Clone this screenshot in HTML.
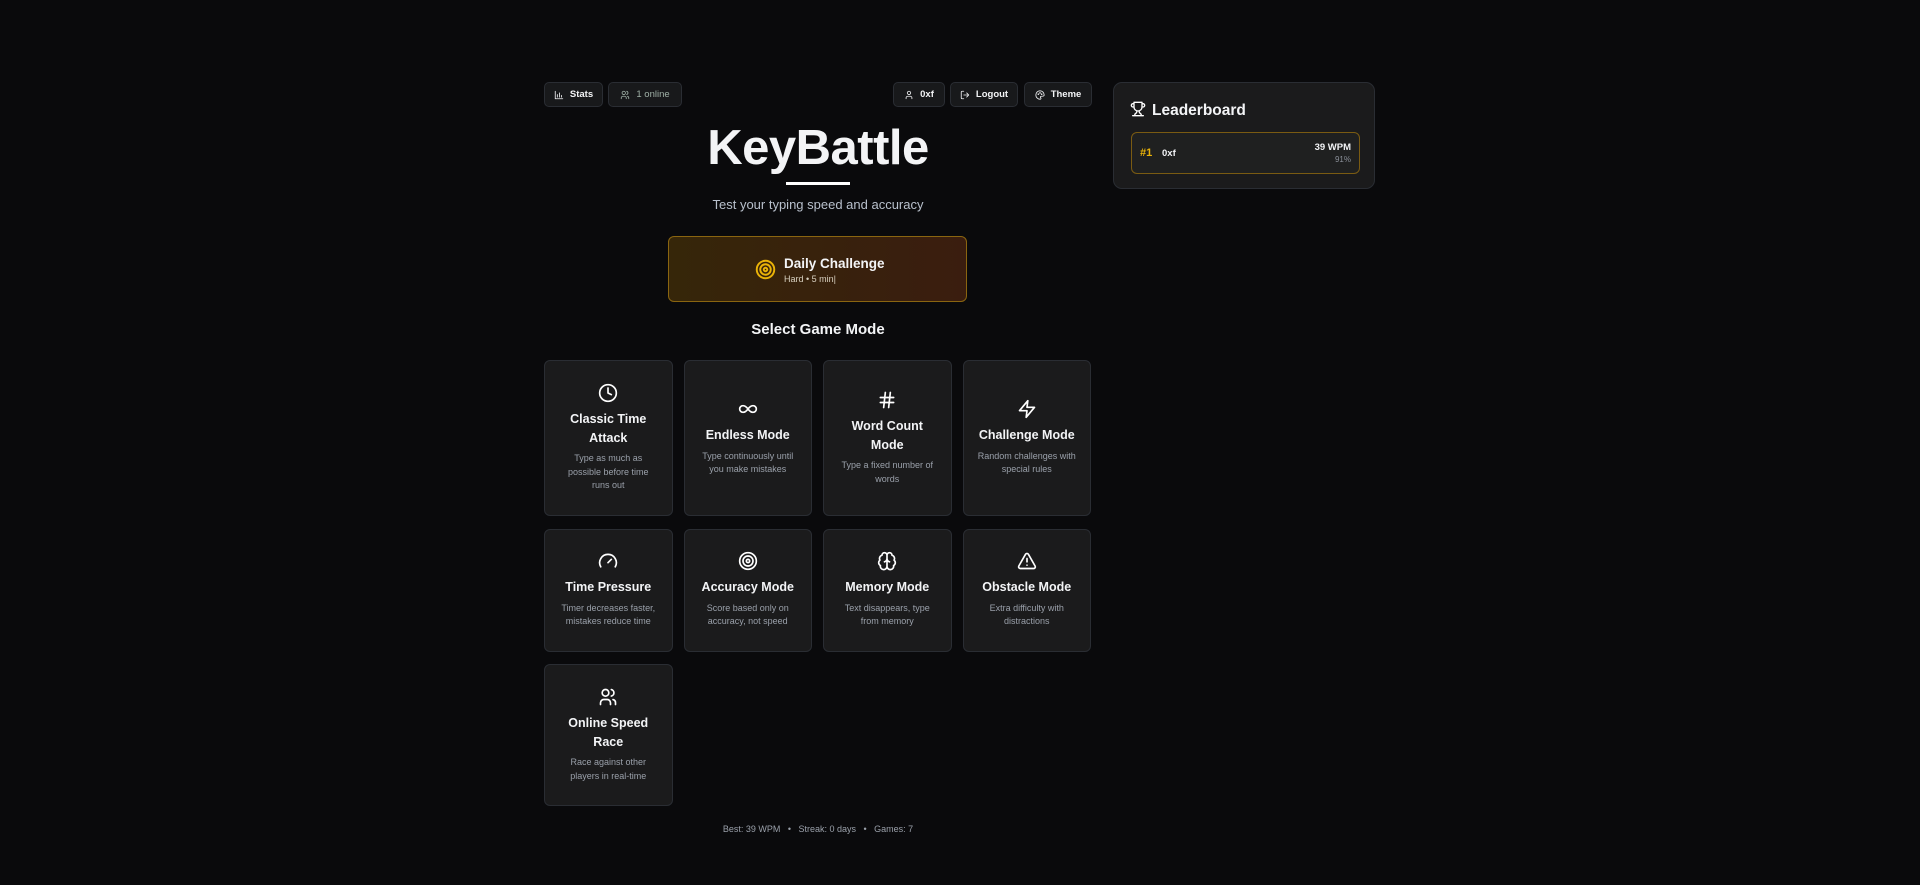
<!DOCTYPE html>
<html><head><meta charset="utf-8"><style>
*{box-sizing:border-box;margin:0;padding:0}
body{width:1920px;height:885px;background:#0a0a0c;font-family:"Liberation Sans",sans-serif;color:#f3f4f6;position:relative;overflow:hidden}
.btn{position:absolute;top:82px;height:25px;background:#18191b;border:1px solid #2a2d33;border-radius:5px;font-size:9.5px;font-weight:bold;display:flex;align-items:center;justify-content:center;gap:6px;color:#f3f4f6}
.btn svg{width:10px;height:10px;fill:none;stroke:currentColor;stroke-width:2;stroke-linecap:round;stroke-linejoin:round}
h1{position:absolute;left:544px;width:548px;top:120px;text-align:center;font-size:49px;font-weight:bold;color:#f3f4f6;letter-spacing:-0.5px}
.ul{position:absolute;left:786px;top:182px;width:64px;height:3px;background:#fff}
.sub{position:absolute;left:544px;width:548px;top:197px;text-align:center;font-size:13px;color:#b8c0cc}
.daily{position:absolute;left:668px;top:236px;width:299px;height:66px;border:1px solid #8a6510;border-radius:6px;background:linear-gradient(90deg,#362609,#3a1d0f)}
.sel{position:absolute;left:544px;width:548px;top:321px;text-align:center;font-size:15px;font-weight:bold}
.grid{position:absolute;left:544px;top:360px;width:548px;display:grid;grid-template-columns:repeat(4,128.5px);column-gap:11px;grid-template-rows:156px 123px 142px;row-gap:12.5px}
.card{background:#1b1b1c;border:1px solid #2a2d33;border-radius:6px;display:flex;flex-direction:column;align-items:center;justify-content:center;text-align:center;padding:0 14px}
.card svg{width:20px;height:20px;fill:none;stroke:#fff;stroke-width:2;stroke-linecap:round;stroke-linejoin:round;margin-bottom:7px}
.card b{font-size:12.5px;line-height:18.5px;display:block}
.card p{font-size:9px;line-height:13.5px;color:#9aa0aa;margin-top:5px}
.lb{position:absolute;left:1113px;top:82px;width:262px;height:107px;background:#1b1b1c;border:1px solid #2a2d33;border-radius:9px}
.foot{position:absolute;left:544px;width:548px;top:824px;text-align:center;font-size:9px;color:#9aa0aa}
</style></head><body>
<div class="btn" style="left:544px;width:59px"><svg viewBox="0 0 24 24"><path d="M3 3v18h18M8 17V11M13 17V7M18 17v-4"/></svg>Stats</div>
<div class="btn" style="left:608px;width:74px;color:#9fb0a6;font-weight:normal"><svg viewBox="0 0 24 24"><circle cx="9" cy="7" r="4"/><path d="M3 21v-2a4 4 0 0 1 4-4h4a4 4 0 0 1 4 4v2M16 3.1a4 4 0 0 1 0 7.8M21 21v-2a4 4 0 0 0-3-3.9"/></svg>1 online</div>
<div class="btn" style="left:893px;width:52px"><svg viewBox="0 0 24 24"><circle cx="12" cy="7" r="4"/><path d="M19 21v-2a4 4 0 0 0-4-4H9a4 4 0 0 0-4 4v2"/></svg>0xf</div>
<div class="btn" style="left:950px;width:68px"><svg viewBox="0 0 24 24"><path d="M9 21H5a2 2 0 0 1-2-2V5a2 2 0 0 1 2-2h4M16 17l5-5-5-5M21 12H9"/></svg>Logout</div>
<div class="btn" style="left:1024px;width:68px"><svg viewBox="0 0 24 24"><path d="M12 22a10 10 0 1 1 10-10c0 3-3 3-5 3h-2a2 2 0 0 0-1 3.8A2 2 0 0 1 12 22z"/><circle cx="8" cy="10" r="1"/><circle cx="12" cy="7" r="1"/><circle cx="16" cy="10" r="1"/></svg>Theme</div>
<h1>KeyBattle</h1>
<div class="ul"></div>
<div class="sub">Test your typing speed and accuracy</div>
<div class="daily">
<svg style="position:absolute;left:86px;top:22px" width="21" height="21" viewBox="0 0 24 24" fill="none" stroke="#eab308" stroke-width="2.2"><circle cx="12" cy="12" r="10"/><circle cx="12" cy="12" r="6"/><circle cx="12" cy="12" r="2"/></svg>
<div style="position:absolute;left:115px;top:19px;font-size:13.5px;font-weight:bold">Daily Challenge</div>
<div style="position:absolute;left:115px;top:37px;font-size:9px;color:#d8d0c0">Hard • 5 min|</div>
</div>
<div class="sel">Select Game Mode</div>
<div class="grid">
<div class="card"><svg viewBox="0 0 24 24"><circle cx="12" cy="12" r="10"/><path d="M12 6v6l4 2"/></svg><b>Classic Time Attack</b><p>Type as much as possible before time runs out</p></div>
<div class="card"><svg viewBox="0 0 24 24"><path d="M12 12c-2-2.7-4-4-6-4a4 4 0 0 0 0 8c2 0 4-1.3 6-4zm0 0c2 2.7 4 4 6 4a4 4 0 0 0 0-8c-2 0-4 1.3-6 4z"/></svg><b>Endless Mode</b><p>Type continuously until you make mistakes</p></div>
<div class="card"><svg viewBox="0 0 24 24"><path d="M4 9h16M4 15h16M10 3 8 21M16 3l-2 18"/></svg><b>Word Count Mode</b><p>Type a fixed number of words</p></div>
<div class="card"><svg viewBox="0 0 24 24"><path d="M13 2 3 14h9l-1 8 10-12h-9l1-8z"/></svg><b>Challenge Mode</b><p>Random challenges with special rules</p></div>
<div class="card"><svg viewBox="0 0 24 24"><path d="m12 14 4-4M3.3 19a10 10 0 1 1 17.4 0"/></svg><b>Time Pressure</b><p>Timer decreases faster, mistakes reduce time</p></div>
<div class="card"><svg viewBox="0 0 24 24"><circle cx="12" cy="12" r="10"/><circle cx="12" cy="12" r="6"/><circle cx="12" cy="12" r="2"/></svg><b>Accuracy Mode</b><p>Score based only on accuracy, not speed</p></div>
<div class="card"><svg viewBox="0 0 24 24"><path d="M12 5a3 3 0 1 0-6 .1 4 4 0 0 0-2.5 5.8 4 4 0 0 0 .6 6.6A4 4 0 1 0 12 18zM12 5a3 3 0 1 1 6 .1 4 4 0 0 1 2.5 5.8 4 4 0 0 1-.6 6.6A4 4 0 1 1 12 18zM12 5v13M9 13a4.5 4.5 0 0 0 3-4M15 13a4.5 4.5 0 0 1-3-4"/></svg><b>Memory Mode</b><p>Text disappears, type from memory</p></div>
<div class="card"><svg viewBox="0 0 24 24"><path d="m21.7 18-8-14a2 2 0 0 0-3.5 0l-8 14A2 2 0 0 0 4 21h16a2 2 0 0 0 1.7-3zM12 9v4M12 17h.01"/></svg><b>Obstacle Mode</b><p>Extra difficulty with distractions</p></div>
<div class="card"><svg viewBox="0 0 24 24"><circle cx="9" cy="7" r="4"/><path d="M3 21v-2a4 4 0 0 1 4-4h4a4 4 0 0 1 4 4v2M16 3.1a4 4 0 0 1 0 7.8M21 21v-2a4 4 0 0 0-3-3.9"/></svg><b>Online Speed Race</b><p>Race against other players in real-time</p></div>
</div>
<div class="lb">
<svg style="position:absolute;left:16px;top:18px" width="16" height="16" viewBox="0 0 24 24" fill="none" stroke="#fff" stroke-width="2" stroke-linecap="round" stroke-linejoin="round"><path d="M6 9H4.5a2.5 2.5 0 0 1 0-5H6M18 9h1.5a2.5 2.5 0 0 0 0-5H18M4 22h16M10 14.7V17c0 .6-.5 1-1 1.2C7.8 18.8 7 20.2 7 22M14 14.7V17c0 .6.5 1 1 1.2 1.2.6 2 2 2 3.8M18 2H6v7a6 6 0 0 0 12 0V2z"/></svg>
<div style="position:absolute;left:38px;top:19px;font-size:15.5px;font-weight:bold">Leaderboard</div>
<div style="position:absolute;left:17px;top:49px;width:229px;height:42px;border:1px solid #7a5b12;border-radius:6px;background:#1f2020">
<span style="position:absolute;left:8px;top:14px;font-size:11px;font-weight:bold;color:#eab308">#1</span>
<span style="position:absolute;left:30px;top:15px;font-size:9.5px;font-weight:bold">0xf</span>
<span style="position:absolute;right:8px;top:9px;font-size:9.5px;font-weight:bold">39 WPM</span>
<span style="position:absolute;right:8px;top:22px;font-size:8px;color:#8a8f98">91%</span>
</div></div>
<div class="foot">Best: 39 WPM &nbsp; • &nbsp; Streak: 0 days &nbsp; • &nbsp; Games: 7</div>
</body></html>
